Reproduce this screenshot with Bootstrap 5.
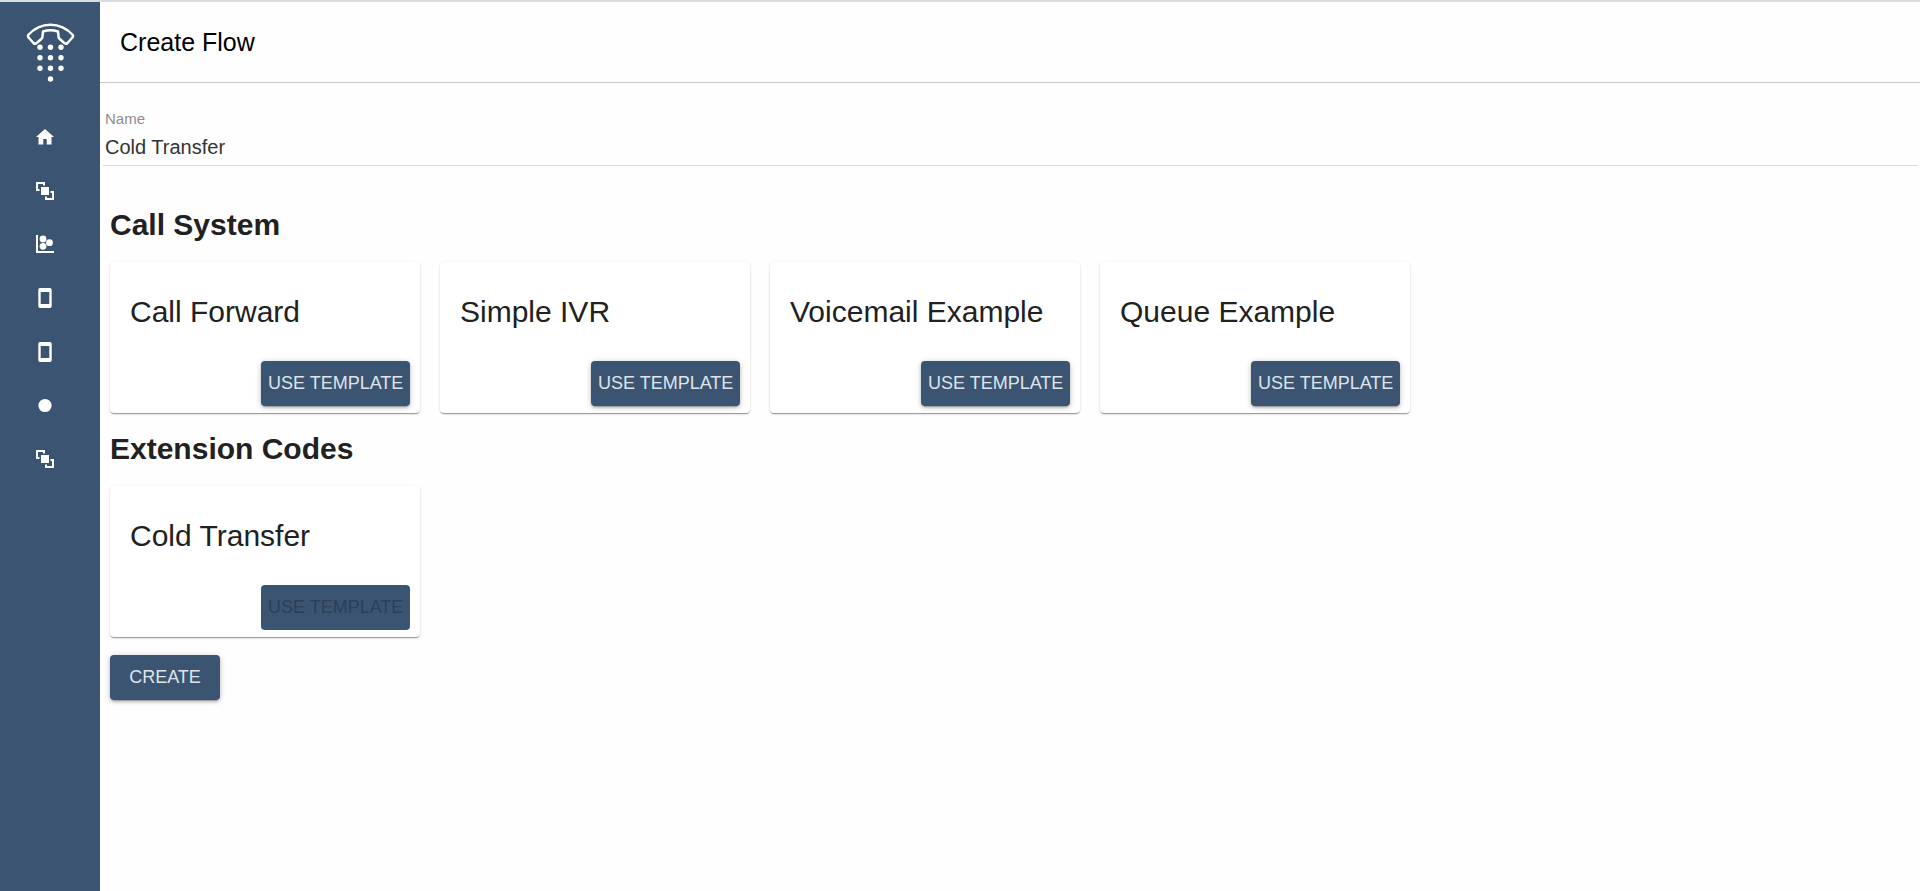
<!DOCTYPE html>
<html lang="en">
<head>
<meta charset="utf-8">
<meta name="viewport" content="width=device-width, initial-scale=1">
<title>Create Flow</title>
<link href="https://cdn.jsdelivr.net/npm/bootstrap@5.3.0/dist/css/bootstrap.min.css" rel="stylesheet">
<style>
  :root { --brand: #3a5472; }
  body { font-family: "Liberation Sans", Arial, sans-serif; color: #212121; border-top: 2px solid #dcdce0; background: #fefefe; }
  .side-bar { width: 100px; background: var(--brand); padding-top: 20px; }
  .side-logo { margin-left: 26px; width: 50px; height: 62px; }
  .side-menu { width: 20px; height: 342px; margin: 43px 0 0 35px; }
  .side-menu a, .side-menu svg { display: block; width: 20px; height: 20px; }
  .page-head { height: 81px; padding: 0 20px; border-bottom: 1px solid #c8c8c8; }
  .page-head h1 { font-size: 25px; line-height: 30px; color: #000; }
  .name-field { margin: 27px 2px 0 3px; padding: 0 2px; border-bottom: 1px solid #dcdcdc; }
  .name-field label { font-size: 15px; line-height: 18px; color: #8e8e8e; }
  .name-field input { font-size: 20px; line-height: 24px; height: 37px; padding: 1px 0 0; color: #333; }
  .flow-groups { padding: 41px 10px 0; }
  .flow-groups h2 { font-size: 30px; line-height: 36px; margin-bottom: 19px; }
  .tpl-row { gap: 20px; margin-bottom: 18px; }
  .tpl-card { width: 310px; height: 151px; padding: 32px 10px 7px 20px; border: 0; border-radius: 4px; background: #fff;
    box-shadow: 0 2px 1px -1px rgba(0,0,0,.24), 0 1px 1px rgba(0,0,0,.14), 0 1px 3px rgba(0,0,0,.14); }
  .tpl-card h3 { font-size: 30px; line-height: 36px; }
  .flow-btn, .flow-btn:hover { --bs-btn-disabled-opacity: 1; height: 45px; padding: 0 7px; border: 0; border-radius: 4px; font-size: 18px; line-height: 45px; color: #dfe4ea; background: var(--brand);
    box-shadow: 0 3px 1px -2px rgba(0,0,0,.2), 0 2px 3px rgba(0,0,0,.14), 0 1px 6px rgba(0,0,0,.2); }
  .flow-btn:disabled { color: #2c4058; background: var(--brand); box-shadow: none; }
  .tpl-btn { width: 149px; }
  .create-btn { width: 110px; }
</style>
</head>
<body class="d-flex min-vh-100">
<aside class="side-bar flex-shrink-0">
  <svg class="side-logo d-block" viewBox="0 0 50 62" aria-hidden="true">
    <path d="M2.200 13Q11.500 2.800 24.500 2.800T46.800 13Q47.500 14.500 46 16L41.500 21Q40 22.500 38.300 21L33.700 17Q32.500 16 32.500 14.500L32 9.500Q24.500 6.800 17 9.500L16.500 14.500Q16.500 16 15.300 17L10.700 21Q9 22.500 7.500 21L3 16Q1.500 14.500 2.200 13Z" fill="none" stroke="#fff" stroke-width="2.500" stroke-linejoin="round"/>
    <g fill="#fff"><circle cx="14" cy="25.300" r="2.700"/><circle cx="24.500" cy="25.300" r="2.700"/><circle cx="35" cy="25.300" r="2.700"/><circle cx="14" cy="35.800" r="2.700"/><circle cx="24.500" cy="35.800" r="2.700"/><circle cx="35" cy="35.800" r="2.700"/><circle cx="14" cy="46.300" r="2.700"/><circle cx="24.500" cy="46.300" r="2.700"/><circle cx="35" cy="46.300" r="2.700"/><circle cx="24.500" cy="57" r="2.700"/></g>
  </svg>
  <nav class="side-menu d-flex flex-column justify-content-between" aria-label="Main">
    <a href="#" aria-label="Home"><svg viewBox="0 0 20 20"><path d="M10 2 19 10H16.500V17.500H11.700V12H8.300V17.500H3.500V10H1Z" fill="#fff"/></svg></a>
    <a href="#" aria-label="Flows"><svg viewBox="0 0 20 20"><path d="M9 4.500V2H2V9H4.500M15.500 11H18V18H11V15.500" fill="none" stroke="#fff" stroke-width="2"/><path d="M6 6h8v8H6z" fill="#fff"/></svg></a>
    <a href="#" aria-label="Reports"><svg viewBox="0 0 20 20"><path d="M2 1V18H19" fill="none" stroke="#fff" stroke-width="2"/><g fill="#fff"><circle cx="8" cy="5" r="3.400"/><circle cx="14.500" cy="8.700" r="3.400"/><circle cx="8" cy="12.300" r="3.400"/></g></svg></a>
    <a href="#" aria-label="Phones"><svg viewBox="0 0 20 20"><path fill-rule="evenodd" d="M5 0H15Q16.700 0 16.700 2V18Q16.700 20 15 20H5Q3.300 20 3.300 18V2Q3.300 0 5 0ZM5.700 4V16H14.300V4Z" fill="#fff"/></svg></a>
    <a href="#" aria-label="Devices"><svg viewBox="0 0 20 20"><path fill-rule="evenodd" d="M5 0H15Q16.700 0 16.700 2V18Q16.700 20 15 20H5Q3.300 20 3.300 18V2Q3.300 0 5 0ZM5.700 4V16H14.300V4Z" fill="#fff"/></svg></a>
    <a href="#" aria-label="Recordings"><svg viewBox="0 0 20 20"><circle cx="10" cy="10.500" r="6.600" fill="#fff"/></svg></a>
    <a href="#" aria-label="Groups"><svg viewBox="0 0 20 20"><path d="M9 4.500V2H2V9H4.500M15.500 11H18V18H11V15.500" fill="none" stroke="#fff" stroke-width="2"/><path d="M6 6h8v8H6z" fill="#fff"/></svg></a>
  </nav>
</aside>
<main class="flex-grow-1">
  <header class="page-head d-flex align-items-center"><h1 class="m-0 fw-normal">Create Flow</h1></header>
  <div class="name-field">
    <label class="d-block" for="flowName">Name</label>
    <input id="flowName" type="text" class="form-control border-0 rounded-0 shadow-none bg-transparent" value="Cold Transfer">
  </div>
  <div class="flow-groups">
    <section>
      <h2 class="fw-bold">Call System</h2>
      <div class="tpl-row d-flex flex-wrap">
        <article class="card tpl-card"><h3 class="m-0 fw-normal">Call Forward</h3><button type="button" class="btn flow-btn tpl-btn mt-auto align-self-end text-nowrap">USE TEMPLATE</button></article>
        <article class="card tpl-card"><h3 class="m-0 fw-normal">Simple IVR</h3><button type="button" class="btn flow-btn tpl-btn mt-auto align-self-end text-nowrap">USE TEMPLATE</button></article>
        <article class="card tpl-card"><h3 class="m-0 fw-normal">Voicemail Example</h3><button type="button" class="btn flow-btn tpl-btn mt-auto align-self-end text-nowrap">USE TEMPLATE</button></article>
        <article class="card tpl-card"><h3 class="m-0 fw-normal">Queue Example</h3><button type="button" class="btn flow-btn tpl-btn mt-auto align-self-end text-nowrap">USE TEMPLATE</button></article>
      </div>
    </section>
    <section>
      <h2 class="fw-bold">Extension Codes</h2>
      <div class="tpl-row d-flex flex-wrap">
        <article class="card tpl-card"><h3 class="m-0 fw-normal">Cold Transfer</h3><button type="button" class="btn flow-btn tpl-btn mt-auto align-self-end text-nowrap" disabled>USE TEMPLATE</button></article>
      </div>
    </section>
    <button type="button" class="btn flow-btn create-btn">CREATE</button>
  </div>
</main>
<script src="https://cdn.jsdelivr.net/npm/bootstrap@5.3.0/dist/js/bootstrap.bundle.min.js"></script>
</body>
</html>
